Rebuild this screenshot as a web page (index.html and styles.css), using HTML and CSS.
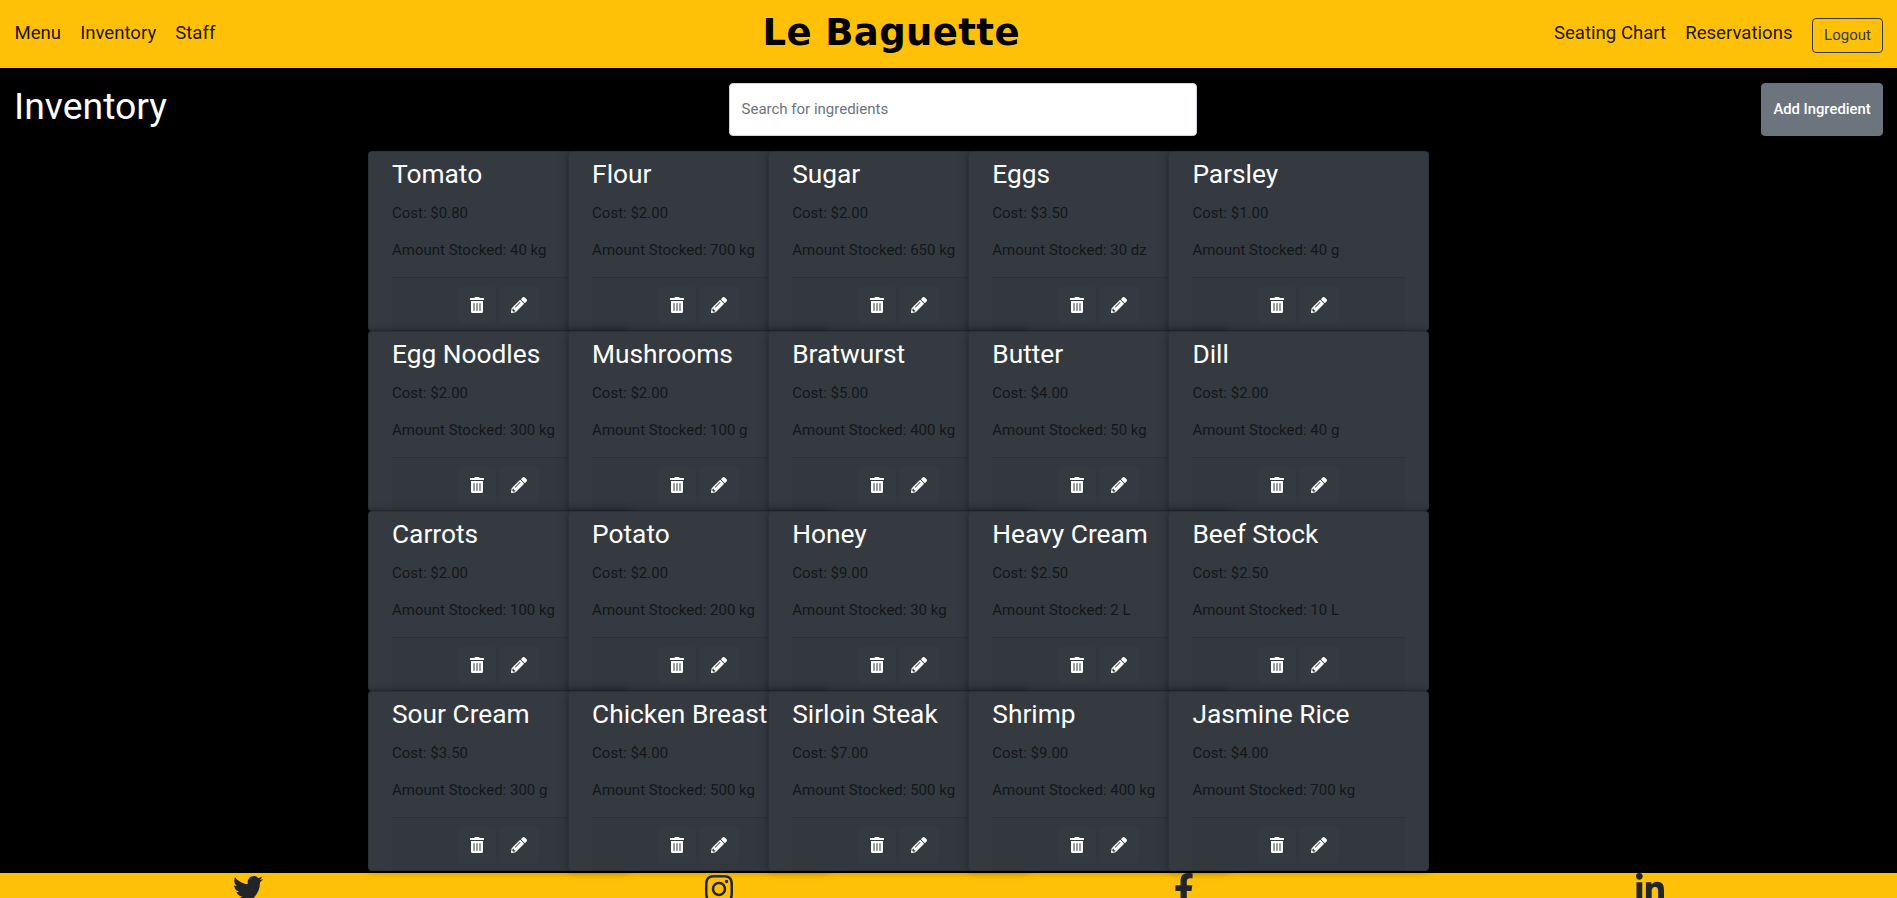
FILE: index.html
```html
<!DOCTYPE html>
<html lang="en">
<head>
<meta charset="utf-8">
<title>Le Baguette</title>
<link rel="stylesheet" href="styles.css">
</head>
<body>
<svg class="sprite" aria-hidden="true">
  <symbol id="trash" viewBox="0 0 448 512"><path d="M32 464a48 48 0 0 0 48 48h288a48 48 0 0 0 48-48V128H32zm272-256a16 16 0 0 1 32 0v224a16 16 0 0 1-32 0zm-96 0a16 16 0 0 1 32 0v224a16 16 0 0 1-32 0zm-96 0a16 16 0 0 1 32 0v224a16 16 0 0 1-32 0zM432 32H312l-9.4-18.7A24 24 0 0 0 281.1 0H166.8a23.72 23.72 0 0 0-21.4 13.3L136 32H16A16 16 0 0 0 0 48v32a16 16 0 0 0 16 16h416a16 16 0 0 0 16-16V48a16 16 0 0 0-16-16z"/></symbol>
  <symbol id="pencil" viewBox="0 0 512 512"><path d="M497.9 142.1l-46.1 46.1c-4.7 4.7-12.3 4.7-17 0l-111-111c-4.7-4.7-4.7-12.3 0-17l46.1-46.1c18.7-18.7 49.1-18.7 67.9 0l60.1 60.1c18.8 18.7 18.8 49.1 0 67.9zM284.2 99.8L21.6 362.4.4 483.9c-2.9 16.4 11.4 30.6 27.8 27.8l121.5-21.3 262.6-262.6c4.7-4.7 4.7-12.3 0-17l-111-111c-4.8-4.7-12.4-4.7-17.1 0zM124.1 339.9c-5.5-5.5-5.5-14.3 0-19.8l154-154c5.5-5.5 14.3-5.5 19.8 0s5.5 14.3 0 19.8l-154 154c-5.5 5.5-14.3 5.5-19.8 0zM88 424h48v36.3l-64.5 11.3-31.1-31.1L51.7 376H88v48z"/></symbol>
</svg>
<nav class="navbar">
  <div class="nav-group">
    <a class="nav-link" href="#">Menu</a>
    <a class="nav-link" href="#">Inventory</a>
    <a class="nav-link" href="#">Staff</a>
  </div>
  <div class="brand">Le Baguette</div>
  <div class="nav-group">
    <a class="nav-link" href="#">Seating Chart</a>
    <a class="nav-link" href="#">Reservations</a>
    <button class="logout" type="button">Logout</button>
  </div>
</nav>
<main>
  <div class="toolbar">
    <h1>Inventory</h1>
    <input class="search" type="text" placeholder="Search for ingredients">
    <button class="add" type="button">Add Ingredient</button>
  </div>
  <div class="grid">
    <article class="card"><div class="card-body"><h3>Tomato</h3><p>Cost: $0.80</p><p>Amount Stocked: 40 kg</p></div><div class="card-footer"><button class="icon-btn" type="button"><svg class="ic-trash"><use href="#trash"/></svg></button><button class="icon-btn wide" type="button"><svg class="ic-pencil"><use href="#pencil"/></svg></button></div></article>
    <article class="card"><div class="card-body"><h3>Flour</h3><p>Cost: $2.00</p><p>Amount Stocked: 700 kg</p></div><div class="card-footer"><button class="icon-btn" type="button"><svg class="ic-trash"><use href="#trash"/></svg></button><button class="icon-btn wide" type="button"><svg class="ic-pencil"><use href="#pencil"/></svg></button></div></article>
    <article class="card"><div class="card-body"><h3>Sugar</h3><p>Cost: $2.00</p><p>Amount Stocked: 650 kg</p></div><div class="card-footer"><button class="icon-btn" type="button"><svg class="ic-trash"><use href="#trash"/></svg></button><button class="icon-btn wide" type="button"><svg class="ic-pencil"><use href="#pencil"/></svg></button></div></article>
    <article class="card"><div class="card-body"><h3>Eggs</h3><p>Cost: $3.50</p><p>Amount Stocked: 30 dz</p></div><div class="card-footer"><button class="icon-btn" type="button"><svg class="ic-trash"><use href="#trash"/></svg></button><button class="icon-btn wide" type="button"><svg class="ic-pencil"><use href="#pencil"/></svg></button></div></article>
    <article class="card"><div class="card-body"><h3>Parsley</h3><p>Cost: $1.00</p><p>Amount Stocked: 40 g</p></div><div class="card-footer"><button class="icon-btn" type="button"><svg class="ic-trash"><use href="#trash"/></svg></button><button class="icon-btn wide" type="button"><svg class="ic-pencil"><use href="#pencil"/></svg></button></div></article>
    <article class="card"><div class="card-body"><h3>Egg Noodles</h3><p>Cost: $2.00</p><p>Amount Stocked: 300 kg</p></div><div class="card-footer"><button class="icon-btn" type="button"><svg class="ic-trash"><use href="#trash"/></svg></button><button class="icon-btn wide" type="button"><svg class="ic-pencil"><use href="#pencil"/></svg></button></div></article>
    <article class="card"><div class="card-body"><h3>Mushrooms</h3><p>Cost: $2.00</p><p>Amount Stocked: 100 g</p></div><div class="card-footer"><button class="icon-btn" type="button"><svg class="ic-trash"><use href="#trash"/></svg></button><button class="icon-btn wide" type="button"><svg class="ic-pencil"><use href="#pencil"/></svg></button></div></article>
    <article class="card"><div class="card-body"><h3>Bratwurst</h3><p>Cost: $5.00</p><p>Amount Stocked: 400 kg</p></div><div class="card-footer"><button class="icon-btn" type="button"><svg class="ic-trash"><use href="#trash"/></svg></button><button class="icon-btn wide" type="button"><svg class="ic-pencil"><use href="#pencil"/></svg></button></div></article>
    <article class="card"><div class="card-body"><h3>Butter</h3><p>Cost: $4.00</p><p>Amount Stocked: 50 kg</p></div><div class="card-footer"><button class="icon-btn" type="button"><svg class="ic-trash"><use href="#trash"/></svg></button><button class="icon-btn wide" type="button"><svg class="ic-pencil"><use href="#pencil"/></svg></button></div></article>
    <article class="card"><div class="card-body"><h3>Dill</h3><p>Cost: $2.00</p><p>Amount Stocked: 40 g</p></div><div class="card-footer"><button class="icon-btn" type="button"><svg class="ic-trash"><use href="#trash"/></svg></button><button class="icon-btn wide" type="button"><svg class="ic-pencil"><use href="#pencil"/></svg></button></div></article>
    <article class="card"><div class="card-body"><h3>Carrots</h3><p>Cost: $2.00</p><p>Amount Stocked: 100 kg</p></div><div class="card-footer"><button class="icon-btn" type="button"><svg class="ic-trash"><use href="#trash"/></svg></button><button class="icon-btn wide" type="button"><svg class="ic-pencil"><use href="#pencil"/></svg></button></div></article>
    <article class="card"><div class="card-body"><h3>Potato</h3><p>Cost: $2.00</p><p>Amount Stocked: 200 kg</p></div><div class="card-footer"><button class="icon-btn" type="button"><svg class="ic-trash"><use href="#trash"/></svg></button><button class="icon-btn wide" type="button"><svg class="ic-pencil"><use href="#pencil"/></svg></button></div></article>
    <article class="card"><div class="card-body"><h3>Honey</h3><p>Cost: $9.00</p><p>Amount Stocked: 30 kg</p></div><div class="card-footer"><button class="icon-btn" type="button"><svg class="ic-trash"><use href="#trash"/></svg></button><button class="icon-btn wide" type="button"><svg class="ic-pencil"><use href="#pencil"/></svg></button></div></article>
    <article class="card"><div class="card-body"><h3>Heavy Cream</h3><p>Cost: $2.50</p><p>Amount Stocked: 2 L</p></div><div class="card-footer"><button class="icon-btn" type="button"><svg class="ic-trash"><use href="#trash"/></svg></button><button class="icon-btn wide" type="button"><svg class="ic-pencil"><use href="#pencil"/></svg></button></div></article>
    <article class="card"><div class="card-body"><h3>Beef Stock</h3><p>Cost: $2.50</p><p>Amount Stocked: 10 L</p></div><div class="card-footer"><button class="icon-btn" type="button"><svg class="ic-trash"><use href="#trash"/></svg></button><button class="icon-btn wide" type="button"><svg class="ic-pencil"><use href="#pencil"/></svg></button></div></article>
    <article class="card"><div class="card-body"><h3>Sour Cream</h3><p>Cost: $3.50</p><p>Amount Stocked: 300 g</p></div><div class="card-footer"><button class="icon-btn" type="button"><svg class="ic-trash"><use href="#trash"/></svg></button><button class="icon-btn wide" type="button"><svg class="ic-pencil"><use href="#pencil"/></svg></button></div></article>
    <article class="card"><div class="card-body"><h3>Chicken Breast</h3><p>Cost: $4.00</p><p>Amount Stocked: 500 kg</p></div><div class="card-footer"><button class="icon-btn" type="button"><svg class="ic-trash"><use href="#trash"/></svg></button><button class="icon-btn wide" type="button"><svg class="ic-pencil"><use href="#pencil"/></svg></button></div></article>
    <article class="card"><div class="card-body"><h3>Sirloin Steak</h3><p>Cost: $7.00</p><p>Amount Stocked: 500 kg</p></div><div class="card-footer"><button class="icon-btn" type="button"><svg class="ic-trash"><use href="#trash"/></svg></button><button class="icon-btn wide" type="button"><svg class="ic-pencil"><use href="#pencil"/></svg></button></div></article>
    <article class="card"><div class="card-body"><h3>Shrimp</h3><p>Cost: $9.00</p><p>Amount Stocked: 400 kg</p></div><div class="card-footer"><button class="icon-btn" type="button"><svg class="ic-trash"><use href="#trash"/></svg></button><button class="icon-btn wide" type="button"><svg class="ic-pencil"><use href="#pencil"/></svg></button></div></article>
    <article class="card"><div class="card-body"><h3>Jasmine Rice</h3><p>Cost: $4.00</p><p>Amount Stocked: 700 kg</p></div><div class="card-footer"><button class="icon-btn" type="button"><svg class="ic-trash"><use href="#trash"/></svg></button><button class="icon-btn wide" type="button"><svg class="ic-pencil"><use href="#pencil"/></svg></button></div></article>
  </div>
</main>
<footer class="footer">
  <a href="#" aria-label="Twitter"><svg class="social tw" viewBox="0 0 512 512" preserveAspectRatio="none"><path d="M459.37 151.716c.325 4.548.325 9.097.325 13.645 0 138.72-105.583 298.558-298.558 298.558-59.452 0-114.68-17.219-161.137-47.106 8.447.974 16.568 1.299 25.34 1.299 49.055 0 94.213-16.568 130.274-44.832-46.132-.975-84.792-31.188-98.112-72.772 6.498.974 12.995 1.624 19.818 1.624 9.421 0 18.843-1.3 27.614-3.573-48.081-9.747-84.143-51.98-84.143-102.985v-1.299c13.969 7.797 30.214 12.67 47.431 13.319-28.264-18.843-46.781-51.005-46.781-87.391 0-19.492 5.197-37.36 14.294-52.954 51.655 63.675 129.3 105.258 216.365 109.807-1.624-7.797-2.599-15.918-2.599-24.04 0-57.828 46.782-104.934 104.934-104.934 30.213 0 57.502 12.67 76.67 33.137 23.715-4.548 46.456-13.32 66.599-25.34-7.798 24.366-24.366 44.833-46.132 57.827 21.117-2.273 41.584-8.122 60.426-16.243-14.292 20.791-32.161 39.308-52.628 54.253z"/></svg></a>
  <a href="#" aria-label="Instagram"><svg class="social ig" viewBox="0 0 448 512"><path d="M224.1 141c-63.6 0-114.9 51.3-114.9 114.9s51.3 114.9 114.9 114.9S339 319.5 339 255.9 287.7 141 224.1 141zm0 189.6c-41.1 0-74.7-33.5-74.7-74.7s33.5-74.7 74.7-74.7 74.7 33.5 74.7 74.7-33.6 74.7-74.7 74.7zm146.4-194.3c0 14.9-12 26.8-26.8 26.8-14.9 0-26.8-12-26.8-26.8s12-26.8 26.8-26.8 26.8 12 26.8 26.8zm76.1 27.2c-1.7-35.9-9.9-67.7-36.2-93.9-26.2-26.2-58-34.4-93.9-36.2-37-2.1-147.9-2.1-184.9 0-35.8 1.7-67.6 9.9-93.9 36.1s-34.4 58-36.2 93.9c-2.1 37-2.1 147.9 0 184.9 1.7 35.9 9.9 67.7 36.2 93.9s58 34.4 93.9 36.2c37 2.1 147.9 2.1 184.9 0 35.9-1.7 67.7-9.9 93.9-36.2 26.2-26.2 34.4-58 36.2-93.9 2.1-37 2.1-147.8 0-184.8zM398.8 388c-7.8 19.6-22.9 34.7-42.6 42.6-29.5 11.7-99.5 9-132.1 9s-102.7 2.6-132.1-9c-19.6-7.8-34.7-22.9-42.6-42.6-11.7-29.5-9-99.5-9-132.1s-2.6-102.7 9-132.1c7.8-19.6 22.9-34.7 42.6-42.6 29.5-11.7 99.5-9 132.1-9s102.7-2.6 132.1 9c19.6 7.8 34.7 22.9 42.6 42.6 11.7 29.5 9 99.5 9 132.1s2.7 102.7-9 132.1z"/></svg></a>
  <a href="#" aria-label="Facebook"><svg class="social fb" viewBox="0 0 320 512"><path d="M279.14 288l14.22-92.66h-88.91v-60.13c0-25.35 12.42-50.06 52.24-50.06h40.42V6.26S260.43 0 225.36 0c-73.22 0-121.08 44.38-121.08 124.72v70.62H22.89V288h81.39v224h100.17V288z"/></svg></a>
  <a href="#" aria-label="LinkedIn"><svg class="social ig" viewBox="0 0 448 512"><path d="M100.28 448H7.4V148.9h92.88zM53.79 108.1C24.09 108.1 0 83.5 0 53.8a53.79 53.79 0 0 1 107.58 0c0 29.7-24.1 54.3-53.79 54.3zM447.9 448h-92.68V302.4c0-34.7-.7-79.2-48.29-79.2-48.29 0-55.69 37.7-55.69 76.7V448h-92.78V148.9h89.08v40.8h1.3c12.4-23.5 42.69-48.3 87.88-48.3 94 0 111.28 61.9 111.28 142.3V448z"/></svg></a>
</footer>
</body>
</html>
```
FILE: styles.css
```css
* { box-sizing: border-box; }
html, body { height: 100%; }
body {
  margin: 0;
  background: #000;
  color: #212529;
  font-family: Roboto, "Liberation Sans", sans-serif;
  font-size: 16px;
  line-height: 1.5;
  overflow: hidden;
}
.sprite { display: none; }
.navbar {
  height: 68px;
  background: #ffc107;
  padding: 0 14px 2px 5px;
  display: flex;
  align-items: center;
  justify-content: space-between;
}
.nav-group { display: flex; align-items: center; }
.nav-link {
  padding: 8px 9.5px;
  font-size: 18.6px;
  line-height: 27px;
  color: rgba(0, 0, 0, 0.9);
  text-decoration: none;
}
.brand {
  margin-left: 13px;
  font-family: "DejaVu Sans", sans-serif;
  font-weight: 700;
  font-size: 37px;
  letter-spacing: 0.4px;
  line-height: 66px;
  color: #000;
}
.logout {
  margin: 4px 0 0 10px;
  height: 35px;
  width: 71px;
  padding: 0;
  font: 400 15px/21px Roboto, sans-serif;
  color: #343a40;
  background: transparent;
  border: 1px solid #343a40;
  border-radius: 4px;
}
.toolbar {
  padding: 15px 14px;
  display: flex;
  align-items: flex-start;
  justify-content: space-between;
}
.toolbar h1 {
  margin: 0;
  font-size: 37.4px;
  font-weight: 400;
  line-height: 46px;
  color: #fff;
}
.search {
  margin-right: 3px;
  width: 468px;
  height: 53px;
  padding: 0 12px 2px;
  font: 400 15px/21px Roboto, sans-serif;
  color: #495057;
  background: #fff;
  border: 1px solid #ced4da;
  border-radius: 4px;
}
.search::placeholder { color: #6c757d; opacity: 1; }
.add {
  width: 122px;
  height: 53px;
  padding: 0;
  font: 500 14.8px/21px Roboto, sans-serif;
  color: #fff;
  background: #6c757d;
  border: 1px solid #6c757d;
  border-radius: 4px;
}
.grid {
  margin-left: 368px;
  display: grid;
  grid-template-columns: repeat(5, 200.1px);
  grid-auto-rows: 180px;
}
.card {
  width: 260.9px;
  height: 180px;
  display: flex;
  flex-direction: column;
  background: #343a40;
  border: 1px solid rgba(0, 0, 0, 0.125);
  border-radius: 4px;
  box-shadow: 0 0 8px rgba(0, 0, 0, 0.35);
}
.card-body { padding: 6px 23px 0; flex: 1; }
.card h3 {
  margin: 0 0 11.5px;
  font-size: 26.3px;
  font-weight: 400;
  line-height: 33.6px;
  color: #fff;
  white-space: nowrap;
}
.card p {
  margin: 0 0 16px;
  font-size: 15px;
  line-height: 21px;
  color: #141618;
  white-space: nowrap;
}
.card-footer {
  margin: 0 23px;
  height: 54px;
  padding: 8px 16px;
  display: flex;
  justify-content: center;
  gap: 3px;
  background: rgba(0, 0, 0, 0.03);
  border-top: 1px solid rgba(0, 0, 0, 0.125);
}
.icon-btn {
  width: 38px;
  height: 38px;
  padding: 0;
  display: flex;
  align-items: center;
  justify-content: center;
  background: #343a40;
  border: 1px solid #343a40;
  border-radius: 4px;
}
.icon-btn.wide { width: 40px; }
.ic-trash { width: 14px; height: 16px; fill: #fff; }
.ic-pencil { width: 16px; height: 16px; fill: #fff; }
.footer {
  margin-top: 2px;
  background: #ffc107;
  padding: 0 12px;
  display: flex;
  justify-content: space-around;
}
.footer a { display: block; line-height: 0; }
.social { height: 32px; fill: #212529; }
.social.tw { width: 30px; }
.social.ig { width: 28px; }
.social.fb { width: 20px; }
```
